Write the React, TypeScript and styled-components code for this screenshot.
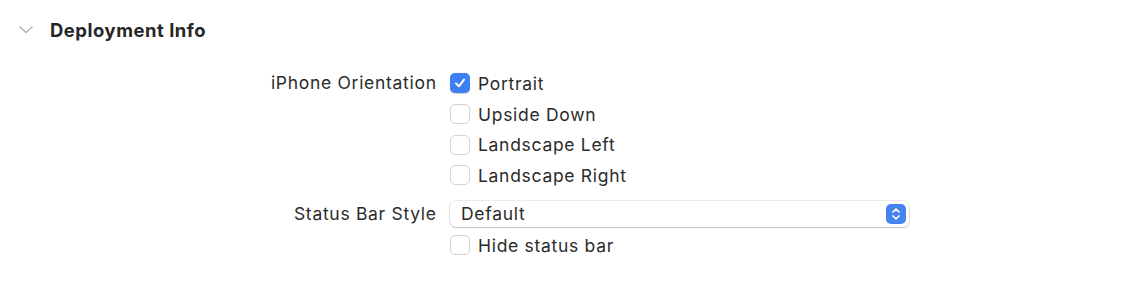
import React from "react";
import styled, { createGlobalStyle } from "styled-components";

const Global = createGlobalStyle`
  html, body { margin: 0; padding: 0; background: #ffffff; }
  body { font-family: Inter, "Noto Sans", "Liberation Sans", sans-serif; color: #262626; }
`;

const Page = styled.div`
  width: 1128px;
  height: 296px;
  box-sizing: border-box;
  padding-top: 19px;
`;

const Header = styled.div`
  display: flex;
  align-items: center;
  height: 22px;
  padding-left: 19px;
  gap: 17px;
`;

const Title = styled.span`
  font-size: 18.4px;
  font-weight: 700;
  color: #262626;
  letter-spacing: 0.55px;
`;

const Form = styled.div`
  display: grid;
  grid-template-columns: 436px 1fr;
  column-gap: 14px;
  margin-top: 27px;
  align-items: start;
`;

const Label = styled.div<{ $h: number }>`
  text-align: right;
  font-size: 17.5px;
  letter-spacing: 0.7px;
  margin-right: -0.7px;
  height: ${(p) => p.$h}px;
  line-height: ${(p) => p.$h}px;
  color: #2b2b2b;
`;

const Stack = styled.div`
  display: flex;
  flex-direction: column;
`;

const Option = styled.label`
  display: flex;
  align-items: center;
  height: 30.7px;
  gap: 8px;
  font-size: 17.5px;
  letter-spacing: 0.7px;
  color: #2b2b2b;
`;

const Box = styled.span<{ $checked?: boolean }>`
  width: 20px;
  height: 20px;
  box-sizing: border-box;
  border-radius: 5px;
  display: flex;
  align-items: center;
  justify-content: center;
  background: ${(p) => (p.$checked ? "#3d80f4" : "#ffffff")};
  border: ${(p) => (p.$checked ? "none" : "1px solid #d4d4d4")};
  box-shadow: ${(p) =>
    p.$checked ? "0 0.5px 1px rgba(0,0,0,0.2)" : "inset 0 0.5px 1px rgba(0,0,0,0.04)"};
`;

const Popup = styled.div`
  width: 459px;
  height: 26px;
  box-sizing: border-box;
  border-radius: 6px;
  background: #ffffff;
  box-shadow: 0 0 0 0.5px rgba(0, 0, 0, 0.14), 0 1px 2px rgba(0, 0, 0, 0.2);
  display: flex;
  align-items: center;
  justify-content: space-between;
  padding: 0 3px 0 11px;
  font-size: 17.5px;
  letter-spacing: 0.7px;
  color: #2b2b2b;
`;

const Stepper = styled.span`
  width: 20px;
  height: 20px;
  border-radius: 5px;
  background: #4583f0;
  display: flex;
  align-items: center;
  justify-content: center;
`;

const PopupRow = styled.div`
  margin-top: 10px;
`;

const PopupLabel = styled(Label)`
  margin-top: 10px;
`;

const HideRow = styled.div`
  margin-top: 3px;
`;

const Check = () => (
  <svg width="14" height="14" viewBox="0 0 14 14">
    <path d="M3 7.4 L5.9 10.3 L11 3.6" fill="none" stroke="#fff" strokeWidth="2" strokeLinecap="round" strokeLinejoin="round" />
  </svg>
);

const Checkbox = ({ checked, children }: { checked?: boolean; children: React.ReactNode }) => (
  <Option>
    <Box $checked={checked}>{checked && <Check />}</Box>
    <span>{children}</span>
  </Option>
);

export default function App() {
  return (
    <Page>
      <Global />
      <Header>
        <svg width="14" height="8" viewBox="0 0 14 8">
          <path d="M1 1 L7 6.5 L13 1" fill="none" stroke="#b5b5b5" strokeWidth="1.6" strokeLinecap="round" strokeLinejoin="round" />
        </svg>
        <Title>Deployment Info</Title>
      </Header>
      <Form>
        <Label $h={30.7}>iPhone Orientation</Label>
        <Stack>
          <Checkbox checked>Portrait</Checkbox>
          <Checkbox>Upside Down</Checkbox>
          <Checkbox>Landscape Left</Checkbox>
          <Checkbox>Landscape Right</Checkbox>
        </Stack>
        <PopupLabel $h={26}>Status Bar Style</PopupLabel>
        <PopupRow>
          <Popup>
            <span>Default</span>
            <Stepper>
              <svg width="10" height="14" viewBox="0 0 10 14">
                <path d="M2 5 L5 2 L8 5 M2 9 L5 12 L8 9" fill="none" stroke="#fff" strokeWidth="1.7" strokeLinecap="round" strokeLinejoin="round" />
              </svg>
            </Stepper>
          </Popup>
        </PopupRow>
        <div />
        <HideRow>
          <Checkbox>Hide status bar</Checkbox>
        </HideRow>
      </Form>
    </Page>
  );
}
